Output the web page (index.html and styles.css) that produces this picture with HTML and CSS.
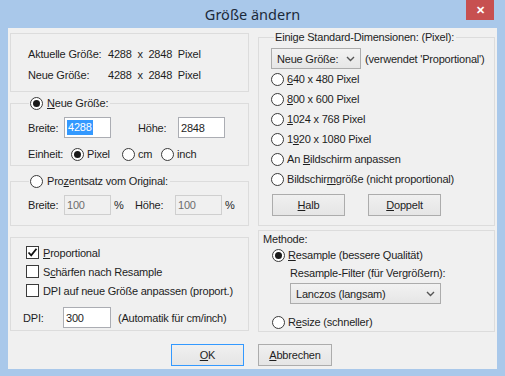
FILE: index.html
```html
<!DOCTYPE html>
<html>
<head>
    <meta charset="UTF-8">
    <title>Größe ändern</title>
    <link rel="stylesheet" href="styles.css">
</head>
<body>
    <div class="window">
        <div class="titlebar">
            <span class="title">Größe ändern</span>
            <button class="close">&#x2715;</button>
        </div>

        <div class="client">
            <div class="columns">
                <!-- Left column -->
                <div class="col col-left">
                    <div class="box box-info">
                        <div class="info-row"><span class="info-label">Aktuelle Größe:</span><span class="info-value">4288  x  2848  Pixel</span></div>
                        <div class="info-row"><span class="info-label">Neue Größe:</span><span class="info-value">4288  x  2848  Pixel</span></div>
                    </div>

                    <fieldset class="group group-new">
                        <legend><span class="radio checked"></span><span><u>N</u>eue Größe:</span></legend>
                        <div class="field-row">
                            <span class="lbl lbl-w">Breite:</span>
                            <span class="input"><span class="sel">4288</span></span>
                            <span class="lbl lbl-h">Höhe:</span>
                            <span class="input">2848</span>
                        </div>
                        <div class="unit-row">
                            <span class="lbl lbl-unit">Einheit:</span>
                            <span class="opt opt-pixel"><span class="radio checked"></span>Pixel</span>
                            <span class="opt opt-cm"><span class="radio"></span>cm</span>
                            <span class="opt"><span class="radio"></span>inch</span>
                        </div>
                    </fieldset>

                    <fieldset class="group group-pct">
                        <legend><span class="radio"></span><span>Pro<u>z</u>entsatz vom Original:</span></legend>
                        <div class="field-row">
                            <span class="lbl lbl-w">Breite:</span>
                            <span class="input disabled">100</span>
                            <span class="pct">%</span>
                            <span class="lbl lbl-h">Höhe:</span>
                            <span class="input disabled">100</span>
                            <span class="pct">%</span>
                        </div>
                    </fieldset>

                    <div class="box box-options">
                        <div class="check-row"><span class="checkbox checked"><svg width="11" height="11" viewBox="0 0 11 11"><path d="M1.5 5.5 L4.2 8.3 L9.5 1.8" fill="none" stroke="#111" stroke-width="1.8"/></svg></span><span><u>P</u>roportional</span></div>
                        <div class="check-row"><span class="checkbox"></span><span>S<u>c</u>härfen nach Resample</span></div>
                        <div class="check-row"><span class="checkbox"></span><span>DPI auf neue Größe anpassen (proport.)</span></div>
                        <div class="dpi-row">
                            <span class="lbl lbl-dpi">DPI:</span>
                            <span class="input">300</span>
                            <span class="dpi-note">(Automatik für cm/inch)</span>
                        </div>
                    </div>
                </div>

                <!-- Right column -->
                <div class="col col-right">
                    <fieldset class="group group-std">
                        <legend><span>Einige Standard-Dimensionen: (Pixel):</span></legend>
                        <div class="combo-row">
                            <span class="combo combo-size">Neue Größe:<svg class="chev" width="9" height="6" viewBox="0 0 9 6"><path d="M1 1 L4.5 4.5 L8 1" fill="none" stroke="#555" stroke-width="1.4"/></svg></span>
                            <span class="combo-note">(verwendet 'Proportional')</span>
                        </div>
                        <div class="radio-row"><span class="radio"></span><span><u>6</u>40 x 480 Pixel</span></div>
                        <div class="radio-row"><span class="radio"></span><span><u>8</u>00 x 600 Pixel</span></div>
                        <div class="radio-row"><span class="radio"></span><span><u>1</u>024 x 768 Pixel</span></div>
                        <div class="radio-row"><span class="radio"></span><span>1<u>9</u>20 x 1080 Pixel</span></div>
                        <div class="radio-row"><span class="radio"></span><span>An <u>B</u>ildschirm anpassen</span></div>
                        <div class="radio-row"><span class="radio"></span><span>Bildschir<u>m</u>größe (nicht proportional)</span></div>
                        <div class="std-buttons">
                            <button class="btn"><u>H</u>alb</button>
                            <button class="btn"><u>D</u>oppelt</button>
                        </div>
                    </fieldset>

                    <div class="box box-method">
                        <div class="method-title">Methode:</div>
                        <div class="radio-row method-radio"><span class="radio checked"></span><span><u>R</u>esample (bessere Qualität)</span></div>
                        <div class="filter-label">Resample-Filter (für Vergrößern):</div>
                        <span class="combo combo-filter">Lanczos (langsam)<svg class="chev" width="9" height="6" viewBox="0 0 9 6"><path d="M1 1 L4.5 4.5 L8 1" fill="none" stroke="#555" stroke-width="1.4"/></svg></span>
                        <div class="radio-row method-resize"><span class="radio"></span><span>R<u>e</u>size (schneller)</span></div>
                    </div>
                </div>
            </div>

            <div class="actions">
                <button class="btn btn-default"><u>O</u>K</button>
                <button class="btn"><u>A</u>bbrechen</button>
            </div>
        </div>
    </div>
</body>
</html>
```

FILE: styles.css
```css
body {
    margin: 0;
    background: #a9c8ea;
    font-family: 'Liberation Sans', Arial, sans-serif;
    font-size: 11px;
    letter-spacing: -0.2px;
    color: #1e1e1e;
}
.window {
    position: relative;
    width: 505px;
    height: 376px;
    background: #a9c8ea;
}
.titlebar {
    height: 28px;
    display: flex;
    align-items: center;
    justify-content: center;
}
.title {
    font-family: 'Noto Sans', 'Open Sans', sans-serif;
    font-size: 14.5px;
    letter-spacing: 0;
    color: #1c2a3a;
    margin-top: -1px;
}
.close {
    position: absolute;
    top: 0;
    left: 466px;
    width: 28px;
    height: 20px;
    padding: 0;
    border: none;
    background: #c75050;
    color: #fff;
    font-size: 11px;
    font-weight: bold;
    line-height: 20px;
}
.client {
    margin-left: 8px;
    width: 489px;
    height: 341px;
    background: #f0f0f0;
    box-sizing: border-box;
}
.columns {
    display: flex;
    gap: 9px;
    padding-left: 2px;
}
.col {
    display: flex;
    flex-direction: column;
}
.col-left {
    width: 239px;
    padding-top: 5px;
}
.col-right {
    width: 237px;
    padding-top: 2px;
}
.box {
    border: 1px solid #dcdcdc;
    box-sizing: border-box;
}
.group {
    margin: 0;
    border: 1px solid #dcdcdc;
    padding: 0 0 0 17px;
    min-width: 0;
}
.group legend {
    display: flex;
    align-items: center;
    gap: 4px;
    height: 14px;
    padding: 0 2px 0 1px;
    margin-left: 1px;
}
u {
    text-decoration: underline;
    text-underline-offset: 1px;
}

/* info box */
.box-info {
    height: 59px;
    padding: 9px 0 0 17px;
}
.info-row {
    display: flex;
    height: 21px;
    align-items: center;
}
.info-label {
    width: 80px;
}
.info-value {
    white-space: pre;
}

/* inputs */
.lbl {
    display: inline-block;
}
.lbl-w { width: 36px; }
.lbl-h { width: 40px; }
.lbl-unit { width: 43px; }
.input {
    width: 47px;
    height: 21px;
    box-sizing: border-box;
    border: 1px solid #abadb3;
    background: #fff;
    padding: 0 2px;
    display: flex;
    align-items: center;
}
.input.disabled {
    background: #f0f0f0;
    border-color: #cfcfcf;
    color: #6d6d6d;
    height: 20px;
}
.sel {
    background: #3399ff;
    color: #fff;
    padding: 0 1px;
    line-height: 15px;
}
.field-row {
    display: flex;
    align-items: center;
}
.group-new {
    margin-top: 4px;
    padding-bottom: 3px;
}
.group-new .field-row {
    margin-top: 7px;
}
.group-new .input + .lbl-h {
    margin-left: 27px;
}
.unit-row {
    display: flex;
    align-items: center;
    height: 16px;
    margin-top: 8px;
}
.opt {
    display: flex;
    align-items: center;
    gap: 3px;
}
.opt-pixel { width: 51px; }
.opt-cm { width: 39px; }

.group-pct {
    margin-top: 8px;
    padding-bottom: 10px;
}
.group-pct .field-row {
    margin-top: 7px;
}
.pct {
    width: 24px;
    padding-left: 3px;
    box-sizing: border-box;
}

/* radio & checkbox */
.radio {
    width: 13px;
    height: 13px;
    box-sizing: border-box;
    border: 1px solid #3a3a3a;
    border-radius: 50%;
    background: #fff;
    display: inline-flex;
    align-items: center;
    justify-content: center;
    flex: none;
}
.radio.checked::after {
    content: "";
    width: 7px;
    height: 7px;
    border-radius: 50%;
    background: #1a1a1a;
}
.checkbox {
    width: 13px;
    height: 13px;
    box-sizing: border-box;
    border: 1px solid #3a3a3a;
    background: #fff;
    display: inline-flex;
    align-items: center;
    justify-content: center;
    flex: none;
}

/* options box */
.box-options {
    margin-top: 11px;
    height: 94px;
    padding: 5px 0 0 15px;
}
.check-row {
    display: flex;
    align-items: center;
    gap: 4px;
    height: 19px;
}
.dpi-row {
    display: flex;
    align-items: center;
    margin: 7px 0 0 -3px;
}
.lbl-dpi { width: 40px; }
.dpi-row .input { height: 21px; width: 48px; }
.dpi-note { margin-left: 7px; }

/* right column */
.group-std {
    padding: 0 0 9px 12px;
    margin-left: 0;
}
.group-std legend {
    margin-left: 3px;
}
.combo-row {
    display: flex;
    align-items: center;
    margin-top: 4px;
    gap: 4px;
}
.combo {
    display: flex;
    align-items: center;
    justify-content: space-between;
    box-sizing: border-box;
    height: 21px;
    border: 1px solid #acacac;
    background: linear-gradient(#f2f2f2, #e6e6e6);
    padding: 0 5px 0 5px;
}
.combo-size { width: 90px; }
.radio-row {
    display: flex;
    align-items: center;
    gap: 3px;
    height: 20px;
}
.std-buttons {
    display: flex;
    gap: 23px;
    margin: 5px 0 0 1px;
}
.btn {
    width: 73px;
    height: 22px;
    padding: 0;
    border: 1px solid #acacac;
    background: linear-gradient(#f0f0f0, #e5e5e5);
    font-family: 'Liberation Sans', Arial, sans-serif;
    font-size: 11px;
    letter-spacing: -0.2px;
    color: #1e1e1e;
}

.box-method {
    margin-top: 4px;
    height: 102px;
    padding: 1px 0 0 13px;
}
.method-title {
    height: 14px;
    line-height: 14px;
    margin-left: -9px;
}
.method-radio {
    height: 18px;
}
.filter-label {
    margin: 2px 0 0 18px;
    height: 14px;
    line-height: 14px;
}
.combo-filter {
    width: 151px;
    margin: 3px 0 0 18px;
}
.method-resize {
    height: 18px;
    margin-top: 9px;
}

/* bottom buttons */
.actions {
    display: flex;
    gap: 14px;
    padding-left: 163px;
    margin-top: 12px;
}
.btn-default {
    border-color: #3399ff;
}
.actions .btn + .btn {
    width: 74px;
}
```
